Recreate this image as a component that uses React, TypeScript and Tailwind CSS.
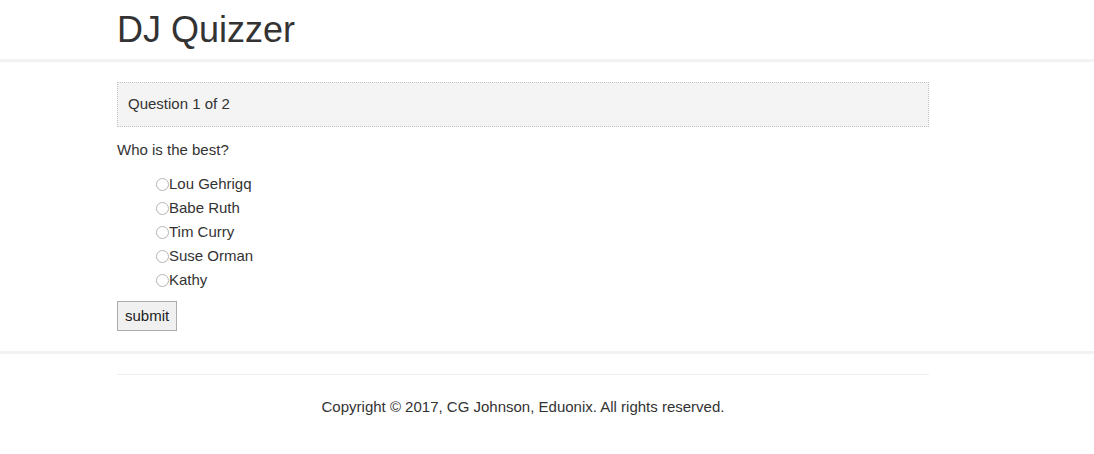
import React from "react";

const choices = ["Lou Gehrigq", "Babe Ruth", "Tim Curry", "Suse Orman", "Kathy"];

export default function App() {
  return (
    <div className="min-h-[454px] bg-white text-[#333] text-[15px]" style={{ fontFamily: '"Liberation Sans", Arial, sans-serif' }}>
      <header className="h-[62px] border-b-[3px] border-[#f2f2f2]">
        <div className="ml-[117px] w-[812px] h-[59px] flex items-center">
          <h1 className="text-[36px] leading-none font-normal">DJ Quizzer</h1>
        </div>
      </header>
      <main className="border-b-[3px] border-[#f2f2f2] pb-[20px]">
        <div className="ml-[117px] w-[812px] pt-[20px]">
          <div className="h-[45px] flex items-center px-[10px] bg-[#f4f4f4] border border-dotted border-[#c4c4c4]">
            Question 1 of 2
          </div>
          <p className="mt-[13px] leading-[20px]">Who is the best?</p>
          <ul className="mt-[12px] pl-[39px]">
            {choices.map((c) => (
              <li key={c} className="h-[24px] flex items-center">
                <span className="w-[13px] h-[13px] rounded-full border border-[#b5b5b5] bg-white box-border inline-block" />
                <span className="leading-[20px]">{c}</span>
              </li>
            ))}
          </ul>
          <button className="mt-[9px] h-[30px] px-[7px] bg-[#f0f0f0] border border-[#ababab] text-[#222] text-[15px]">
            submit
          </button>
        </div>
      </main>
      <footer className="pt-[20px]">
        <div className="ml-[117px] w-[812px] border-t border-[#eeeeee]">
          <p className="mt-[22px] text-center leading-[20px]">Copyright © 2017, CG Johnson, Eduonix. All rights reserved.</p>
        </div>
      </footer>
    </div>
  );
}
